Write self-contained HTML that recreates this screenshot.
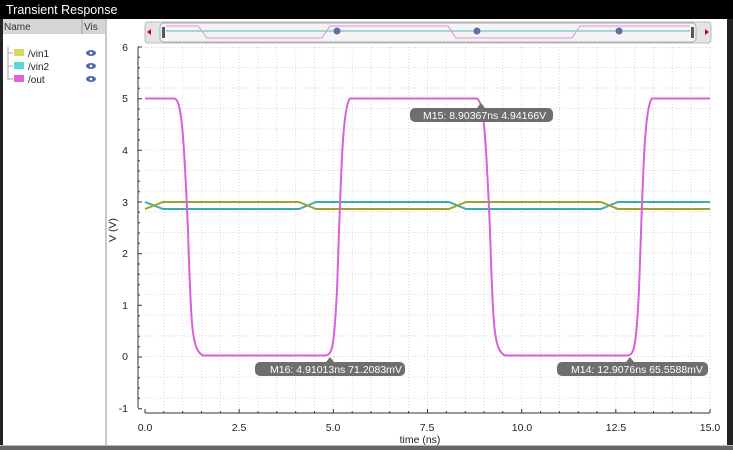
<!DOCTYPE html>
<html><head><style>
html,body{margin:0;padding:0;width:733px;height:450px;overflow:hidden;background:#fff;font-family:"Liberation Sans",sans-serif}
</style></head><body>
<svg width="733" height="450" xmlns="http://www.w3.org/2000/svg" font-family="Liberation Sans, sans-serif">
<rect x="0" y="0" width="733" height="450" fill="#fff"/>
<rect x="0" y="0" width="733" height="19" fill="#000"/>
<text x="6" y="14" fill="#fff" font-size="12.5">Transient Response</text>
<rect x="0" y="19" width="3" height="431" fill="#222"/>
<rect x="727" y="19" width="6" height="431" fill="#222"/>
<rect x="0" y="446" width="733" height="4" fill="#666"/>
<rect x="0" y="445" width="733" height="1" fill="#bbb"/>
<!-- left panel header -->
<rect x="3" y="19" width="103" height="15" fill="#d6d6d6"/>
<line x1="82" y1="19" x2="82" y2="34" stroke="#999"/>
<text x="4" y="30" font-size="10" fill="#333">Name</text>
<text x="84" y="30" font-size="10" fill="#333">Vis</text>
<rect x="105" y="19" width="2" height="426" fill="#c8c8c8"/>
<path d="M8 47 V80 M8 53 H13 M8 66 H13 M8 79 H13" stroke="#aaa" fill="none"/>
<rect x="14" y="49" width="10" height="7" fill="#d8d860"/>
<rect x="14" y="62" width="10" height="7" fill="#5ad8d8"/>
<rect x="14" y="75" width="10" height="7" fill="#e060e0"/>
<text x="28" y="57" font-size="10" fill="#222">/vin1</text>
<text x="28" y="70" font-size="10" fill="#222">/vin2</text>
<text x="28" y="83" font-size="10" fill="#222">/out</text>
<g fill="#4a6aa8"><ellipse cx="91" cy="53" rx="5" ry="3"/><ellipse cx="91" cy="66" rx="5" ry="3"/><ellipse cx="91" cy="79" rx="5" ry="3"/></g>
<g fill="#fff"><circle cx="91" cy="53" r="1.3"/><circle cx="91" cy="66" r="1.3"/><circle cx="91" cy="79" r="1.3"/></g>
<!-- scrollbar -->
<rect x="145" y="22" width="566" height="21" rx="3" fill="#e4e4e4" stroke="#bbb"/>
<rect x="160" y="23" width="536" height="19" rx="4" fill="#f4f4f4" stroke="#aaa"/>
<path d="M147 32 l4 -3 v6z" fill="#d00"/><path d="M709 32 l-4 -3 v6z" fill="#d00"/>
<rect x="162" y="27" width="3" height="11" fill="#555"/><rect x="691" y="27" width="3" height="11" fill="#555"/>
<line x1="166" y1="31" x2="690" y2="31" stroke="#5ab8b8"/>
<path d="M166 26 H198 L207 38 H322 L330 26 H448 L456 38 H572 L580 26 H690" stroke="#e090e0" fill="none"/>
<g fill="#6a6aa0"><circle cx="337" cy="31" r="3.5"/><circle cx="477" cy="31" r="3.5"/><circle cx="619" cy="31" r="3.5"/></g>
<!-- grid -->
<g stroke="#d8d8d8" stroke-dasharray="1,2">
<path d="M163.8 47V408M182.7 47V408M201.5 47V408M220.3 47V408M239.2 47V408M258 47V408M276.8 47V408M295.7 47V408M314.5 47V408M333.3 47V408M352.2 47V408M371 47V408M389.8 47V408M408.7 47V408M427.5 47V408M446.3 47V408M465.2 47V408M484 47V408M502.8 47V408M521.7 47V408M540.5 47V408M559.3 47V408M578.2 47V408M597 47V408M615.8 47V408M634.7 47V408M653.5 47V408M672.3 47V408M691.2 47V408M710 47V408"/>
<path d="M145 47.5H710M145 67.5H710M145 88H710M145 108.5H710M145 129H710M145 150H710M145 170.5H710M145 191H710M145 212H710M145 232.5H710M145 253H710M145 274H710M145 294.5H710M145 315H710M145 336H710M145 356.5H710M145 377H710M145 398H710"/>
</g>
<!-- axes -->
<g stroke="#333" fill="none">
<path d="M138 47 V408"/>
<path d="M138 47h4M138 98.7h4M138 150.3h4M138 202h4M138 253.7h4M138 305.3h4M138 357h4M138 408.7h4"/>
<path d="M138 57.3h2M138 67.7h2M138 78h2M138 88.3h2M138 109h2M138 119.3h2M138 129.7h2M138 140h2M138 160.7h2M138 171h2M138 181.3h2M138 191.7h2M138 212.3h2M138 222.7h2M138 233h2M138 243.3h2M138 264h2M138 274.3h2M138 284.7h2M138 295h2M138 315.7h2M138 326h2M138 336.3h2M138 346.7h2M138 367.3h2M138 377.7h2M138 388h2M138 398.3h2"/>
<path d="M145 413 H710"/>
<path d="M145 413v-4M239.2 413v-4M333.3 413v-4M427.5 413v-4M521.7 413v-4M615.8 413v-4M710 413v-4"/>
<path d="M163.8 413v-2M182.7 413v-2M201.5 413v-2M220.3 413v-2M258 413v-2M276.8 413v-2M295.7 413v-2M314.5 413v-2M352.2 413v-2M371 413v-2M389.8 413v-2M408.7 413v-2M446.3 413v-2M465.2 413v-2M484 413v-2M502.8 413v-2M540.5 413v-2M559.3 413v-2M578.2 413v-2M597 413v-2M634.7 413v-2M653.5 413v-2M672.3 413v-2M691.2 413v-2"/>
</g>
<g font-size="10.5" fill="#222" text-anchor="end">
<text x="128" y="51">6</text><text x="128" y="102">5</text><text x="128" y="154">4</text><text x="128" y="206">3</text><text x="128" y="257">2</text><text x="128" y="309">1</text><text x="128" y="360">0</text><text x="128" y="412">-1</text>
</g>
<g font-size="10.5" fill="#222" text-anchor="middle">
<text x="145" y="431">0.0</text><text x="239" y="431">2.5</text><text x="333" y="431">5.0</text><text x="427" y="431">7.5</text><text x="522" y="431">10.0</text><text x="616" y="431">12.5</text><text x="710" y="431">15.0</text>
<text x="420" y="443">time (ns)</text>
</g>
<text transform="translate(116,230) rotate(-90)" font-size="10.5" fill="#222" text-anchor="middle">V (V)</text>
<!-- waves -->
<path d="M145 202 L163 209 L299 209 L316 202 L449 202 L466 209 L601 209 L618 202 L710 202" stroke="#3aacac" stroke-width="2" fill="none"/>
<path d="M145 209 L163 202 L299 202 L316 209 L449 209 L466 202 L601 202 L618 209 L710 209" stroke="#a0a030" stroke-width="2" fill="none"/>
<path d="M145 98.5 H174 C182 98 184 140 188 230 C191 330 192 350 203 355.5 H325 C332 355 334 350 337 290 C341 180 342 108 350 98.5 H476 C484 98 486 140 490 230 C493 330 494 350 505 355.5 H627 C634 355 636 350 639 290 C643 180 644 108 652 98.5 H710" stroke="#d860d8" stroke-width="2" fill="none"/>
<!-- markers -->
<g fill="#6e6e6e">
<rect x="410" y="108" width="143" height="14" rx="5"/><path d="M477 108 l4 -5 l4 5z"/>
<rect x="255" y="362" width="150" height="14" rx="5"/><path d="M326 362 l4 -5 l4 5z"/>
<rect x="557" y="362" width="151" height="14" rx="5"/><path d="M626 362 l4 -5 l4 5z"/>
</g>
<g font-size="10.5" fill="#fff">
<text x="423" y="119">M15: 8.90367ns 4.94166V</text>
<text x="270" y="373">M16: 4.91013ns 71.2083mV</text>
<text x="571" y="373">M14: 12.9076ns 65.5588mV</text>
</g>
</svg>
</body></html>
